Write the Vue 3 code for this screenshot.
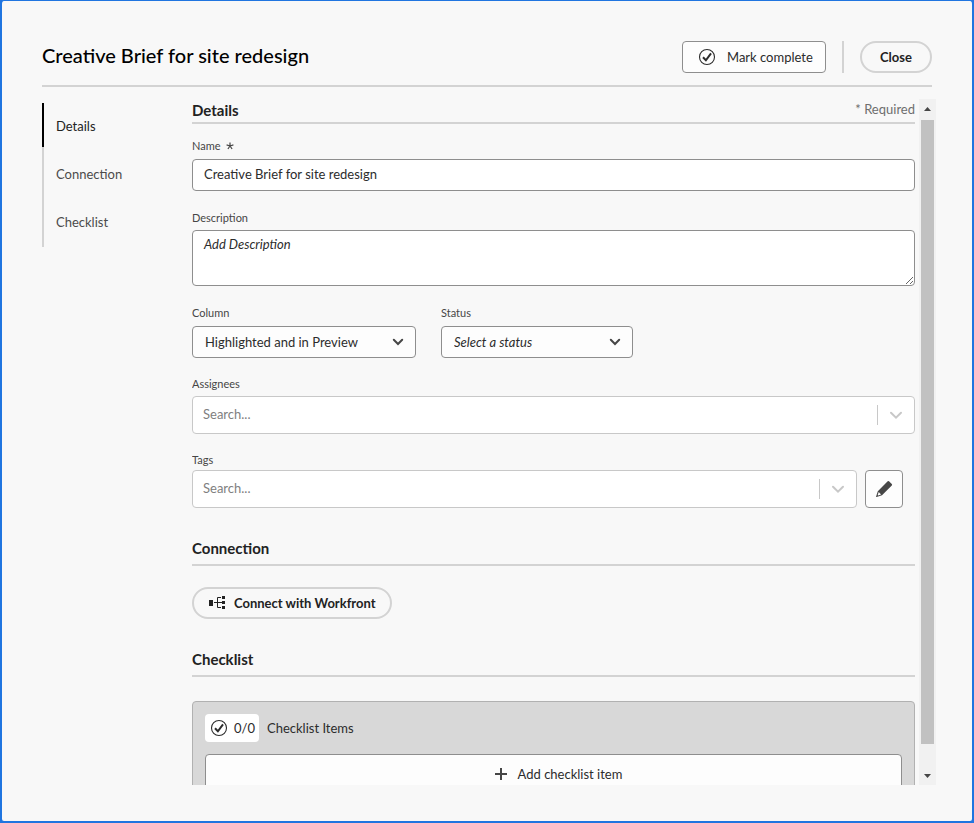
<script setup>
import { ref } from 'vue'

const sections = ['Details', 'Connection', 'Checklist']
const active = ref('Details')
const name = ref('Creative Brief for site redesign')
const description = ref('')
const column = ref('preview')
const status = ref('')
const assignees = ref('')
const tags = ref('')
</script>

<template>
  <main class="dialog">
    <header class="top">
      <h1>{{ name }}</h1>
      <button type="button" class="btn mark">
        <svg class="icon" width="18" height="18" viewBox="0 0 18 18" aria-hidden="true">
          <circle cx="9" cy="9" r="7.5" fill="none" stroke="currentColor" stroke-width="1.1" />
          <path d="M5 9.2l2.9 3.1L13 5.4" fill="none" stroke="currentColor" stroke-width="2" />
        </svg>
        Mark complete
      </button>
      <span class="divider"></span>
      <button type="button" class="btn pill close">Close</button>
    </header>

    <div class="body">
      <nav class="nav">
        <a
          v-for="s in sections"
          :key="s"
          :href="'#' + s.toLowerCase()"
          :class="{ active: s === active }"
          @click="active = s"
        >{{ s }}</a>
      </nav>

      <form class="content" @submit.prevent>
        <div id="details" class="heading first">
          <h2>Details</h2>
          <span class="required">* Required</span>
        </div>

        <div class="field name">
          <label for="name">Name
            <svg width="8" height="8" viewBox="0 0 8 8" aria-hidden="true">
              <path d="M4 4V.4M4 4L.6 2.9M4 4l3.4-1.1M4 4L1.9 7M4 4l2.1 3" fill="none" stroke="currentColor" stroke-width="1.2" />
            </svg>
          </label>
          <input id="name" v-model="name" type="text" class="text" />
        </div>

        <div class="field description">
          <label for="description">Description</label>
          <textarea id="description" v-model="description" placeholder="Add Description"></textarea>
        </div>

        <div class="pair">
          <div class="field column">
            <label for="column">Column</label>
            <div class="picker">
              <select id="column" v-model="column">
                <option value="preview">Highlighted and in Preview</option>
              </select>
              <svg width="12" height="8" viewBox="0 0 12 8" aria-hidden="true">
                <path d="M1.8 1.8L6 6l4.2-4.2" />
              </svg>
            </div>
          </div>
          <div class="field status">
            <label for="status">Status</label>
            <div class="picker">
              <select id="status" v-model="status" class="empty">
                <option value="">Select a status</option>
              </select>
              <svg width="12" height="8" viewBox="0 0 12 8" aria-hidden="true">
                <path d="M1.8 1.8L6 6l4.2-4.2" />
              </svg>
            </div>
          </div>
        </div>

        <div class="field assignees">
          <label for="assignees">Assignees</label>
          <div class="search">
            <input id="assignees" v-model="assignees" type="text" placeholder="Search..." />
            <span class="bar"></span>
            <svg width="14" height="10" viewBox="0 0 14 10" aria-hidden="true">
              <path d="M2 2.8l5 4.8 5-4.8" />
            </svg>
          </div>
        </div>

        <div class="field tags">
          <label for="tags">Tags</label>
          <div class="tag-row">
            <div class="search">
              <input id="tags" v-model="tags" type="text" placeholder="Search..." />
              <span class="bar"></span>
              <svg width="14" height="10" viewBox="0 0 14 10" aria-hidden="true">
                <path d="M2 2.8l5 4.8 5-4.8" />
              </svg>
            </div>
            <button type="button" class="btn edit" aria-label="Edit tags">
              <svg width="18" height="18" viewBox="0 0 18 18" aria-hidden="true">
                <path d="M12.7 1.3a.9.9 0 0 1 1.3 0l2.8 2.8a.9.9 0 0 1 0 1.3L7 15.2 1.6 17a.4.4 0 0 1-.5-.5L2.8 11.2z" fill="#464646" />
                <path d="M3.7 12.1l2.4 2.4-2.9 1-.5-.5z" fill="#fdfdfd" />
              </svg>
            </button>
          </div>
        </div>

        <div id="connection" class="heading">
          <h2>Connection</h2>
        </div>
        <button type="button" class="btn pill connect">
          <svg width="17" height="14" viewBox="0 0 17 14" aria-hidden="true">
            <path d="M0 4h4v6H0zM13 0h3v3h-3zM13 5h3v3h-3zM13 10h3v3h-3z" fill="#222" />
            <path d="M5 6.5h8M12 1.5H8.5v10H12" fill="none" stroke="#222" />
          </svg>
          Connect with Workfront
        </button>

        <div id="checklist" class="heading">
          <h2>Checklist</h2>
        </div>
        <section class="panel">
          <div class="summary">
            <span class="count">
              <svg class="icon" width="18" height="18" viewBox="0 0 18 18" aria-hidden="true">
                <circle cx="9" cy="9" r="7.5" fill="none" stroke="currentColor" stroke-width="1.1" />
                <path d="M5 9.2l2.9 3.1L13 5.4" fill="none" stroke="currentColor" stroke-width="2" />
              </svg>
              0/0
            </span>
            <span>Checklist Items</span>
          </div>
          <button type="button" class="btn add">
            <svg width="12" height="12" viewBox="0 0 12 12" aria-hidden="true">
              <path d="M0 6h12M6 0v12" fill="none" stroke="#464646" stroke-width="2" />
            </svg>
            Add checklist item
          </button>
        </section>
      </form>

      <div class="scrollbar" aria-hidden="true">
        <svg width="7" height="4" viewBox="0 0 7 4"><path d="M0 4l3.5-4L7 4z" /></svg>
        <div class="track"><div class="thumb"></div></div>
        <svg width="7" height="4" viewBox="0 0 7 4"><path d="M0 0l3.5 4L7 0z" /></svg>
      </div>
    </div>
  </main>
</template>

<style>
body {
  background: #2075e0;
}
</style>

<style scoped>
* {
  box-sizing: border-box;
}

.dialog {
  display: flex;
  flex-direction: column;
  height: 100vh;
  padding: 40px 36px 36px 40px;
  border: 2px solid #2075e0;
  border-top-width: 1px;
  border-radius: 4px;
  background: #f8f8f8;
  color: #2c2c2c;
  font-family: Lato, "Noto Sans", sans-serif;
  font-size: 13px;
  line-height: 20px;
}

h1,
h2 {
  margin: 0;
}

.top {
  display: flex;
  align-items: center;
  flex: none;
  margin: 0 4px 12px 0;
  padding-bottom: 12px;
  border-bottom: 2px solid #d3d3d3;
}

h1 {
  flex: 1;
  padding-bottom: 4px;
  color: #000;
  font-size: 20px;
  font-weight: 500;
  line-height: 26px;
}

.btn {
  display: flex;
  align-items: center;
  justify-content: center;
  height: 32px;
  padding: 0;
  border: 1px solid #8e8e8e;
  border-radius: 4px;
  background: #fdfdfd;
  color: #2c2c2c;
  font: inherit;
}

.mark {
  justify-content: flex-start;
  width: 144px;
  gap: 11px;
  padding-left: 15px;
}

.icon {
  flex: none;
}

.divider {
  width: 2px;
  height: 32px;
  margin: 0 16px;
  background: #d3d3d3;
}

.pill {
  border: 2px solid #d3d3d3;
  border-radius: 16px;
  background: transparent;
  color: #222;
  font-weight: 700;
}

.close {
  width: 72px;
}

.body {
  display: flex;
  flex: 1;
  min-height: 0;
}

.nav {
  display: flex;
  flex: none;
  flex-direction: column;
  align-self: flex-start;
  width: 150px;
  margin-top: 4px;
  background: linear-gradient(#d3d3d3, #d3d3d3) no-repeat 0 0 / 2px 100%;
}

.nav a {
  height: 44px;
  margin-bottom: 4px;
  padding-left: 12px;
  border-left: 2px solid transparent;
  color: #4b4b4b;
  line-height: 46px;
  text-decoration: none;
}

.nav .active {
  border-color: #000;
  color: #222;
}

.content {
  flex: 1;
  min-width: 0;
  overflow-y: auto;
  scrollbar-width: none;
}

.heading {
  display: flex;
  justify-content: space-between;
  margin-top: 29px;
  padding-bottom: 5px;
  border-bottom: 2px solid #d3d3d3;
  line-height: 22px;
}

.heading.first {
  margin-top: 0;
  padding-bottom: 1px;
}

h2 {
  color: #222;
  font-size: 15px;
  font-weight: 700;
  line-height: 22px;
}

.required {
  color: #6e6e6e;
  line-height: 20px;
}

.field {
  display: flex;
  flex-direction: column;
  gap: 4px;
}

label {
  color: #464646;
  font-size: 11px;
  line-height: 16px;
}

label svg {
  margin-left: 3px;
}

.name {
  gap: 5px;
  margin-top: 14px;
}

.description,
.pair {
  margin-top: 19px;
}

.text,
textarea,
select {
  width: 100%;
  border: 1px solid #8e8e8e;
  border-radius: 4px;
  background: #fff;
  color: #2c2c2c;
  font: inherit;
}

.text {
  height: 32px;
  padding: 0 11px 2px;
}

textarea {
  display: block;
  height: 56px;
  padding: 3px 11px;
  resize: vertical;
}

textarea::placeholder {
  color: #2c2c2c;
  font-style: italic;
}

.pair {
  display: flex;
  gap: 25px;
}

.pair .field {
  gap: 5px;
}

.column {
  width: 224px;
}

.status {
  width: 192px;
}

.picker {
  display: grid;
  align-items: center;
}

.picker > * {
  grid-area: 1 / 1;
}

.picker svg {
  justify-self: end;
  margin-right: 12px;
  pointer-events: none;
}

.picker path {
  fill: none;
  stroke: #464646;
  stroke-linecap: round;
  stroke-width: 2;
}

select {
  height: 32px;
  padding: 0 30px 0 12px;
  appearance: none;
  background: #fdfdfd;
}

.empty {
  font-style: italic;
}

.assignees,
.tags {
  margin-top: 18px;
}

.tags {
  gap: 2px;
}

.search {
  display: flex;
  flex: 1;
  align-items: center;
  min-height: 38px;
  border: 1px solid #c8c8c8;
  border-radius: 4px;
  background: #fff;
}

.search input {
  flex: 1;
  min-width: 0;
  height: 34px;
  padding: 0 10px 2px;
  border: 0;
  background: transparent;
  color: #2c2c2c;
  font: inherit;
}

.search input::placeholder {
  color: #808080;
}

.bar {
  width: 1px;
  height: 20px;
  background: #c8c8c8;
}

.search svg {
  margin: 0 11px;
}

.search path {
  fill: none;
  stroke: #c8c8c8;
  stroke-linecap: round;
  stroke-width: 2;
}

.tag-row {
  display: flex;
  gap: 8px;
  padding-right: 12px;
}

.edit {
  width: 38px;
  height: 38px;
}

.connect {
  justify-content: flex-start;
  width: 200px;
  gap: 8px;
  margin-top: 21px;
  padding-left: 15px;
}

.panel {
  margin-top: 24px;
  padding: 12px;
  border: 1px solid #b1b1b1;
  border-radius: 4px;
  background: #d8d8d8;
}

.summary {
  display: flex;
  align-items: center;
  gap: 8px;
  margin-bottom: 12px;
}

.count {
  display: flex;
  align-items: center;
  gap: 6px;
  width: 54px;
  height: 28px;
  padding-left: 5px;
  border-radius: 4px;
  background: #fff;
}

.add {
  width: 100%;
  height: 40px;
  gap: 11px;
  padding-left: 10px;
}

.scrollbar {
  display: flex;
  flex: none;
  flex-direction: column;
  align-items: center;
  width: 17px;
  margin-left: 4px;
  padding: 8px 0 7px;
  background: #f1f1f1;
}

.scrollbar path {
  fill: #464646;
}

.track {
  flex: 1;
  margin: 9px 0 17px;
}

.thumb {
  width: 13px;
  height: 98%;
  background: #c1c1c1;
}
</style>
